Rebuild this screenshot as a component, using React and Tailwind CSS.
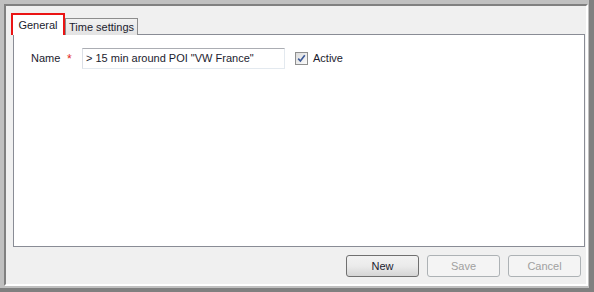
import React from 'react';

const font = { fontFamily: '"Liberation Sans", Arial, sans-serif' };

const Button = ({ children, disabled }) => (
  <button
    type="button"
    className={
      disabled
        ? 'w-[73px] h-[22px] rounded-[3px] border border-[#adb2b5] bg-[#f4f4f4] text-[11px] text-[#a0a0a0]'
        : 'w-[73px] h-[22px] rounded-[3px] border border-[#707070] bg-gradient-to-b from-[#f2f2f2] via-[#ebebeb] to-[#d5d5d5] text-[11px] text-[#1b1b2e]'
    }
  >
    {children}
  </button>
);

const Checkbox = () => (
  <div className="w-[13px] h-[13px] border border-[#8f8f8f] bg-gradient-to-br from-[#dcdcdc] to-[#fbfbfb] flex items-center justify-center">
    <svg width="9" height="9" viewBox="0 0 9 9">
      <path d="M1.2 4.6 L3.4 7 L7.8 1.2" fill="none" stroke="#3d5a98" strokeWidth="1.6" />
    </svg>
  </div>
);

const App = () => {
  return (
    <div
      style={font}
      className="w-[594px] h-[292px] bg-[#c0c0c0] border-r-[5px] border-b-[4px] border-[#808080] pt-[4px] pl-[4px] pr-[1px] pb-[2px] flex"
    >
      <div className="flex-1 flex flex-col bg-[#f0f0f0] border-t-2 border-l-2 border-t-[#808080] border-l-[#808080] border-r-2 border-b-2 border-r-white border-b-white">
        {/* tabs */}
        <div className="flex items-end mt-[7px] ml-[5px] h-[22px] relative z-10">
          <div className="h-[22px] border-2 border-[#ea1414] flex">
            <div className="w-[50px] h-[20px] bg-white flex items-center justify-center text-[11px] text-[#1b1b2e] pt-[1px]">
              General
            </div>
          </div>
          <div className="h-[17px] border border-b-0 border-[#8d8d8d] bg-gradient-to-b from-[#f2f2f2] to-[#e3e3e3] px-[3px] flex items-center text-[11px] text-[#1b1b2e]">
            Time settings
          </div>
        </div>

        <div className="-mt-px ml-[7px] mr-[1px] h-[213px] border border-[#898c95] bg-white pl-[17px] pt-[13px]">
          <div className="flex items-center h-[21px] text-[11px] text-[#1b1b2e]">
            <span className="w-[36px]">Name</span>
            <span className="w-[15px] text-[#e2261b] text-[12px] leading-none">*</span>
            <div className="w-[203px] h-[21px] border border-[#abadb3] border-t-[#abadb3] border-l-[#dbdfe6] border-r-[#e3e9ef] border-b-[#e3e9ef] bg-white flex items-center pl-[3px]">
              &gt; 15 min around POI "VW France"
            </div>
            <div className="ml-[10px]">
              <Checkbox />
            </div>
            <span className="ml-[5px]">Active</span>
          </div>
        </div>

        <div className="flex justify-end gap-[8px] mt-[8px] pr-[5px]">
          <Button>New</Button>
          <Button disabled>Save</Button>
          <Button disabled>Cancel</Button>
        </div>
      </div>
    </div>
  );
};

export default App;
